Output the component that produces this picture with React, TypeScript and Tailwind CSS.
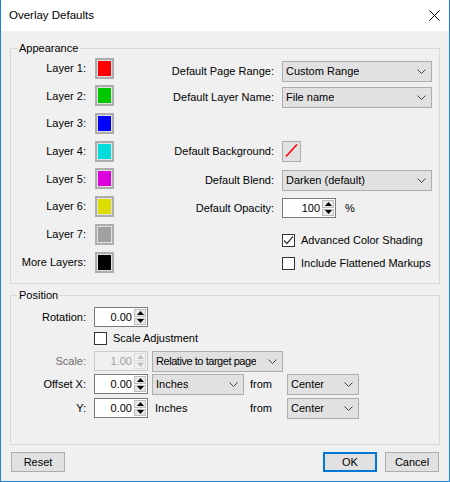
import React from 'react';

const Chevron = () => (
    <svg width="9" height="5" viewBox="0 0 9 5" className="shrink-0">
        <polyline points="0.5,0.5 4.5,4.5 8.5,0.5" fill="none" stroke="#404040" strokeWidth="1" />
    </svg>
);

const Dropdown: React.FC<{ text: string; className: string; textClass?: string }> = ({ text, className, textClass = '' }) => (
    <div className={`h-[21px] shrink-0 bg-[#e1e1e1] border border-[#adadad] flex items-center justify-between pl-[3px] pr-[5px] ${className}`}>
        <span className={`whitespace-nowrap overflow-hidden ${textClass}`}>{text}</span>
        <Chevron />
    </div>
);

const Swatch: React.FC<{ color: string }> = ({ color }) => (
    <div className="w-[19px] h-[21px] border-2 border-[#adadad] bg-[#e1e1e1] p-px">
        <div className={`w-full h-full ${color}`} />
    </div>
);

const Spinner: React.FC<{ value: string; disabled?: boolean; className?: string }> = ({ value, disabled, className = 'w-[54px]' }) => {
    const arrow = disabled ? '#bfbfbf' : '#000';
    const half = disabled ? 'border-[#dcdcdc] bg-[#f0f0f0]' : 'border-[#bcbcbc] bg-[#e8e8e8]';
    return (
        <div className={`h-[20px] shrink-0 border flex ${disabled ? 'border-[#cccccc] bg-[#f0f0f0] text-[#a0a0a0]' : 'border-[#7a7a7a] bg-white'} ${className}`}>
            <div className="flex-1 text-right pr-[2px] leading-[18px]">{value}</div>
            <div className="w-[12px] my-px mr-px flex flex-col gap-px">
                <div className={`flex-1 flex items-center justify-center border ${half}`}>
                    <svg width="7" height="4" viewBox="0 0 7 4"><polygon points="3.5,0 7,4 0,4" fill={arrow} /></svg>
                </div>
                <div className={`flex-1 flex items-center justify-center border ${half}`}>
                    <svg width="7" height="4" viewBox="0 0 7 4"><polygon points="0,0 7,0 3.5,4" fill={arrow} /></svg>
                </div>
            </div>
        </div>
    );
};

const Checkbox: React.FC<{ checked?: boolean; label: string }> = ({ checked, label }) => (
    <div className="flex items-center gap-[6px]">
        <div className="w-[13px] h-[13px] border border-[#333333] bg-white flex items-center justify-center">
            {checked && (
                <svg width="11" height="11" viewBox="0 0 11 11">
                    <polyline points="1,5.5 4,8.5 10,1.5" fill="none" stroke="#333333" strokeWidth="1.2" />
                </svg>
            )}
        </div>
        <span>{label}</span>
    </div>
);

const Button: React.FC<{ label: string; primary?: boolean }> = ({ label, primary }) => (
    <div className={`w-[54px] h-[20px] bg-[#e1e1e1] flex items-center justify-center ${primary ? 'border-2 border-[#0078d7]' : 'border border-[#adadad]'}`}>
        {label}
    </div>
);

const layers = [
    { label: 'Layer 1:', color: 'bg-[#ff0000]' },
    { label: 'Layer 2:', color: 'bg-[#00c800]' },
    { label: 'Layer 3:', color: 'bg-[#0000ff]' },
    { label: 'Layer 4:', color: 'bg-[#00dcdc]' },
    { label: 'Layer 5:', color: 'bg-[#dc00dc]' },
    { label: 'Layer 6:', color: 'bg-[#dcdc00]' },
    { label: 'Layer 7:', color: 'bg-[#a0a0a0]' },
    { label: 'More Layers:', color: 'bg-[#000000]' },
];

export default function App() {
    return (
        <div className="w-[450px] h-[482px] bg-[#f0f0f0] border-x border-b border-[#1883d7] flex flex-col font-['Liberation_Sans',Arial,sans-serif] text-[11px] text-black">
            <div className="h-[31px] shrink-0 bg-white flex items-center justify-between pl-[8px] pr-[9px]">
                <span className="text-[11.5px]">Overlay Defaults</span>
                <svg width="11" height="11" viewBox="0 0 11 11">
                    <path d="M0.5 0.5 L10.5 10.5 M10.5 0.5 L0.5 10.5" stroke="#000" strokeWidth="1" />
                </svg>
            </div>

            <div className="px-[9px] flex flex-col">
                <fieldset className="h-[243px] mt-[10px] border border-[#d8d8d8]">
                    <legend className="ml-[6px] px-[2px] leading-[14px]">Appearance</legend>
                    <div className="flex">
                        <div className="flex flex-col gap-[6.7px] pt-[2.7px]">
                            {layers.map((l) => (
                                <div key={l.label} className="h-[21px] flex items-center gap-[9px]">
                                    <span className="w-[75px] text-right">{l.label}</span>
                                    <Swatch color={l.color} />
                                </div>
                            ))}
                        </div>
                        <div className="flex flex-col pt-[6px]">
                            <div className="h-[21px] flex items-center gap-[8px]">
                                <span className="w-[160px] text-right">Default Page Range:</span>
                                <Dropdown text="Custom Range" className="w-[150px]" />
                            </div>
                            <div className="h-[21px] mt-[5px] flex items-center gap-[8px]">
                                <span className="w-[160px] text-right">Default Layer Name:</span>
                                <Dropdown text="File name" className="w-[150px]" />
                            </div>
                            <div className="h-[21px] mt-[33px] flex items-center gap-[8px]">
                                <span className="w-[160px] text-right">Default Background:</span>
                                <div className="w-[19px] h-[21px] border border-[#adadad] bg-[#e1e1e1]">
                                    <svg width="17" height="19" viewBox="0 0 17 19">
                                        <line x1="3" y1="14.5" x2="14" y2="2.5" stroke="#ff0000" strokeWidth="1.6" />
                                    </svg>
                                </div>
                            </div>
                            <div className="h-[21px] mt-[8px] flex items-center gap-[8px]">
                                <span className="w-[160px] text-right">Default Blend:</span>
                                <Dropdown text="Darken (default)" className="w-[150px]" />
                            </div>
                            <div className="h-[20px] mt-[7px] flex items-center gap-[8px]">
                                <span className="w-[160px] text-right">Default Opacity:</span>
                                <Spinner value="100" />
                                <span className="ml-[1px]">%</span>
                            </div>
                            <div className="h-[15px] mt-[15px] flex items-center pl-[168px]">
                                <Checkbox checked label="Advanced Color Shading" />
                            </div>
                            <div className="h-[15px] mt-[8px] flex items-center pl-[168px]">
                                <Checkbox label="Include Flattened Markups" />
                            </div>
                        </div>
                    </div>
                </fieldset>

                <fieldset className="h-[157px] mt-[4px] border border-[#d8d8d8]">
                    <legend className="ml-[6px] px-[2px] leading-[14px]">Position</legend>
                    <div className="flex flex-col pt-[5px]">
                        <div className="h-[20px] flex items-center gap-[8px]">
                            <span className="w-[75px] text-right">Rotation:</span>
                            <Spinner value="0.00" />
                        </div>
                        <div className="h-[15px] mt-[4px] flex items-center pl-[83px]">
                            <Checkbox label="Scale Adjustment" />
                        </div>
                        <div className="h-[20px] mt-[5px] flex items-center">
                            <span className="w-[75px] shrink-0 text-right text-[#6d6d6d]">Scale:</span>
                            <Spinner value="1.00" disabled className="w-[54px] ml-[8px]" />
                            <Dropdown text="Relative to target page" className="w-[131px] ml-[4px]" textClass="tracking-[-0.45px]" />
                        </div>
                        <div className="h-[20px] mt-[3px] flex items-center">
                            <span className="w-[75px] shrink-0 text-right">Offset X:</span>
                            <Spinner value="0.00" className="w-[54px] ml-[8px]" />
                            <Dropdown text="Inches" className="w-[92px] ml-[4px]" />
                            <span className="ml-[6px] w-[37px] shrink-0">from</span>
                            <Dropdown text="Center" className="w-[72px]" />
                        </div>
                        <div className="h-[20px] mt-[4px] flex items-center">
                            <span className="w-[75px] shrink-0 text-right">Y:</span>
                            <Spinner value="0.00" className="w-[54px] ml-[8px]" />
                            <span className="ml-[7px] w-[95px] shrink-0">Inches</span>
                            <span className="w-[37px] shrink-0">from</span>
                            <Dropdown text="Center" className="w-[72px]" />
                        </div>
                    </div>
                </fieldset>

                <div className="mt-[7px] flex items-center px-px">
                    <Button label="Reset" />
                    <div className="flex-1" />
                    <Button label="OK" primary />
                    <div className="w-[8px]" />
                    <Button label="Cancel" />
                </div>
            </div>
        </div>
    );
}
